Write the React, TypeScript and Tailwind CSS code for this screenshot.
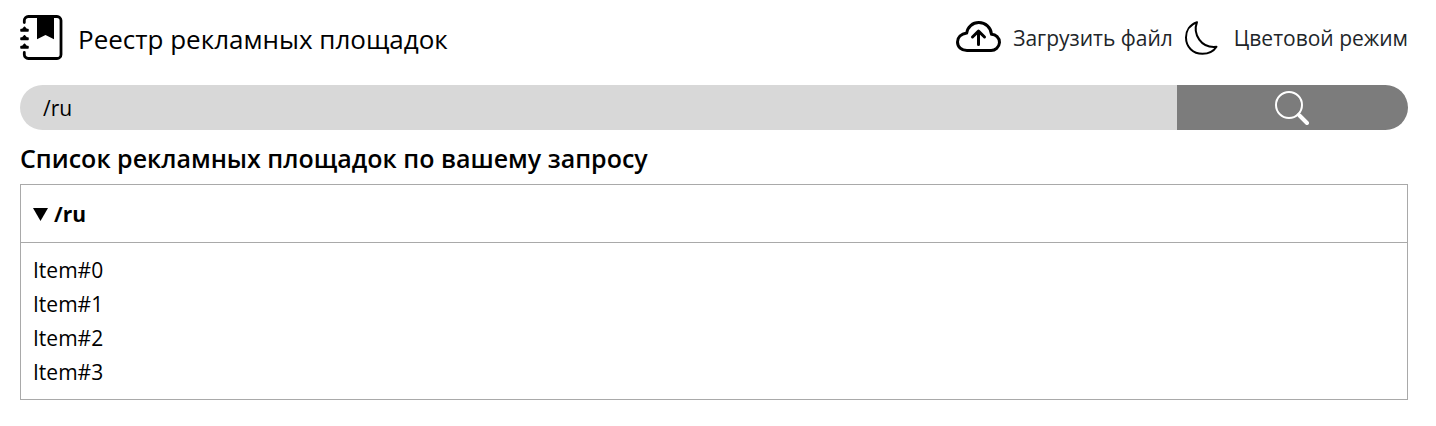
import { useState } from "react";

const items = ["Item#0", "Item#1", "Item#2", "Item#3"];

function NotebookIcon() {
  return (
    <svg width="44" height="46" viewBox="0 0 44 46" aria-hidden="true" className="shrink-0">
      <path d="M4.300 7.500V5.500A4 4 0 0 1 8.300 1.500H37A4 4 0 0 1 41 5.500V39.500A4 4 0 0 1 37 43.500H8.300A4 4 0 0 1 4.300 39.500V37.500" fill="none" stroke="black" strokeWidth="2.800" strokeLinecap="round" />
      <path d="M17 1.500H34V24.300L25.500 20L17 24.300Z" fill="black" />
      {[14, 22.5, 31].map((y) => (
        <path key={y} transform={`translate(0 ${y})`} d="M4.500-1.800L6.500 0.600H8V2H1V0.600H2.500Z" fill="black" stroke="black" strokeWidth="1.500" strokeLinejoin="round" />
      ))}
    </svg>
  );
}

function CloudUploadIcon() {
  return (
    <svg width="45" height="34" viewBox="0 0 45 34" fill="none" stroke="black" strokeWidth="3" strokeLinecap="round" strokeLinejoin="round" aria-hidden="true" className="shrink-0">
      <path d="M11 29.500H34.500A8.500 8.500 0 0 0 43.500 21.500C43.500 16.700 39.800 13.500 35.500 13.300C35 6.500 29.500 1.600 22.800 1.600C16.500 1.600 11.500 6 10.700 12C5 12.800 1.500 16.500 1.500 21C1.500 25.800 5.500 29.500 11 29.500Z" />
      <path d="M22.500 23.500V10.500M16.500 16L22.500 10.200L28.500 16" />
    </svg>
  );
}

function MoonIcon() {
  return (
    <svg width="33" height="34" viewBox="0 0 33 34" fill="none" stroke="black" strokeWidth="2" strokeLinejoin="round" aria-hidden="true" className="shrink-0">
      <path d="M12 1.200C5 3.500 1 9.500 1 16.500C1 26 8 32.800 17.500 32.800C23.500 32.800 28.500 30.500 31.500 25.800C16 27.500 7.500 13 12 1.200Z" />
    </svg>
  );
}

function SearchIcon() {
  return (
    <svg width="34" height="34" viewBox="0 0 34 34" fill="none" stroke="white" aria-hidden="true">
      <circle cx="14" cy="14" r="13" strokeWidth="2" />
      <path d="M22.500 22.500L25 25" strokeWidth="2.500" />
      <path d="M24.500 24.500L32 32" strokeWidth="4" strokeLinecap="round" />
    </svg>
  );
}

export default function App() {
  const [query, setQuery] = useState("/ru");

  return (
    <div className="bg-white px-5 pt-3.5 pr-7 pb-6 font-['Open_Sans','Noto_Sans',sans-serif] text-[21px] text-black">
      <header className="flex h-12 items-center justify-between">
        <div className="flex items-center gap-3.5">
          <NotebookIcon />
          <span className="pt-0.5 text-[26px] leading-9">Реестр рекламных площадок</span>
        </div>
        <nav className="flex items-center gap-3 text-[#212529]">
          <button type="button" className="flex items-center gap-3">
            <CloudUploadIcon />
            <span className="pt-0.5">Загрузить файл</span>
          </button>
          <button type="button" className="flex items-center gap-4">
            <MoonIcon />
            <span className="pt-0.5">Цветовой режим</span>
          </button>
        </nav>
      </header>

      <main>
        <form
          onSubmit={(event) => event.preventDefault()}
          className="mt-[23px] flex h-[45px] overflow-hidden rounded-full"
        >
          <input
            type="text"
            aria-label="Поиск"
            value={query}
            onChange={(event) => setQuery(event.target.value)}
            className="w-5/6 bg-[#d8d8d8] pt-0.5 pl-[23px] outline-none"
          />
          <button type="submit" aria-label="Найти" className="flex w-1/6 items-center justify-center bg-[#7c7c7c]">
            <SearchIcon />
          </button>
        </form>

        <h1 className="mt-2.5 text-[25px] leading-9 font-semibold">Список рекламных площадок по вашему запросу</h1>

        <details open className="group mt-2 border border-[#a9a9a9]">
          <summary className="flex h-[57px] cursor-pointer list-none items-center gap-1.5 px-3 pt-0.5 font-bold">
            <svg width="15" height="13" viewBox="0 0 15 13" aria-hidden="true" className="-rotate-90 group-open:rotate-0">
              <path d="M0 0H15L7.500 13Z" fill="black" />
            </svg>
            /ru
          </summary>
          <ul className="border-t border-[#a9a9a9] px-3 py-2.5 leading-[34px]">
            {items.map((item) => (
              <li key={item}>{item}</li>
            ))}
          </ul>
        </details>
      </main>
    </div>
  );
}
